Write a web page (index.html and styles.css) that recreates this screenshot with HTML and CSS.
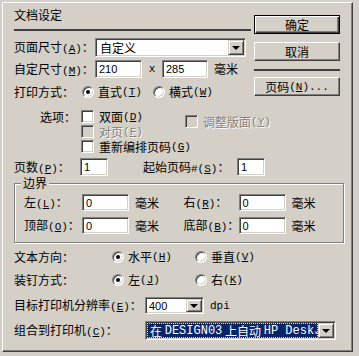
FILE: index.html
```html
<!DOCTYPE html>
<html lang="zh-CN">
<head>
    <meta charset="UTF-8">
    <title>文档设定</title>
    <link rel="stylesheet" href="styles.css">
</head>
<body>
    <div class="dialog">
        <div class="top">
            <div class="main">
                <div class="title">文档设定</div>

                <!-- 页面尺寸 -->
                <div class="row r-size">
                    <span class="lbl w81">页面尺寸<span class="k">(<u>A</u>)</span>：</span>
                    <div class="combo w151">
                        <div class="combo-field">自定义</div>
                        <span class="arrow"></span>
                    </div>
                </div>

                <div class="row r-custom">
                    <span class="lbl w81">自定尺寸<span class="k">(<u>M</u>)</span>：</span>
                    <div class="field w47">210</div>
                    <span class="times">x</span>
                    <div class="field w46">285</div>
                    <span class="unit">毫米</span>
                </div>

                <div class="row r-print">
                    <span class="lbl w68">打印方式：</span>
                    <span class="radio w71"><span class="rb on"></span>直式<span class="k">(<u>T</u>)</span></span>
                    <span class="radio"><span class="rb"></span>横式<span class="k">(<u>W</u>)</span></span>
                </div>

                <!-- 选项 -->
                <div class="options">
                    <div class="opt-label">选项：</div>
                    <div class="opt-list">
                        <div class="check"><span class="cb"></span>双面<span class="k">(<u>D</u>)</span></div>
                        <div class="check disabled"><span class="cb"></span>对页<span class="k">(<u>F</u>)</span></div>
                        <div class="check"><span class="cb"></span>重新编排页码<span class="k">(<u>G</u>)</span></div>
                    </div>
                    <div class="opt-side">
                        <div class="check disabled"><span class="cb"></span>调整版面<span class="k">(<u>Y</u>)</span></div>
                    </div>
                </div>
            </div>

            <div class="buttons">
                <div class="btn default">确定</div>
                <div class="btn b-cancel">取消</div>
                <div class="sep"></div>
                <div class="btn b-page">页码<span class="k">(<u>N</u>)...</span></div>
            </div>
        </div>

        <div class="row r-pages">
            <span class="lbl w66">页数<span class="k">(<u>P</u>)</span>：</span>
            <div class="field w28">1</div>
            <span class="lbl l-start">起始页码<span class="k">#(<u>S</u>)</span>：</span>
            <div class="field w28">1</div>
        </div>

        <!-- 边界 -->
        <fieldset class="group">
            <legend>边界</legend>
            <div class="mrow">
                <div class="mcol">
                    <span class="lbl w58">左<span class="k">(<u>L</u>)</span>：</span>
                    <div class="field w47">0</div>
                    <span class="unit">毫米</span>
                </div>
                <div class="mcol">
                    <span class="lbl w55">右<span class="k">(<u>R</u>)</span>：</span>
                    <div class="field w47">0</div>
                    <span class="unit">毫米</span>
                </div>
            </div>
            <div class="mrow">
                <div class="mcol">
                    <span class="lbl w58">顶部<span class="k">(<u>O</u>)</span>：</span>
                    <div class="field w47">0</div>
                    <span class="unit">毫米</span>
                </div>
                <div class="mcol">
                    <span class="lbl w55">底部<span class="k">(<u>B</u>)</span>：</span>
                    <div class="field w47">0</div>
                    <span class="unit">毫米</span>
                </div>
            </div>
        </fieldset>

        <div class="row r-dir">
            <span class="lbl w98">文本方向：</span>
            <span class="radio w83"><span class="rb on"></span>水平<span class="k">(<u>H</u>)</span></span>
            <span class="radio"><span class="rb"></span>垂直<span class="k">(<u>V</u>)</span></span>
        </div>

        <div class="row r-bind">
            <span class="lbl w98">装钉方式：</span>
            <span class="radio w83"><span class="rb on"></span>左<span class="k">(<u>J</u>)</span></span>
            <span class="radio"><span class="rb"></span>右<span class="k">(<u>K</u>)</span></span>
        </div>

        <div class="row r-dpi">
            <span class="lbl w131">目标打印机分辨率<span class="k">(<u>E</u>)</span>：</span>
            <div class="combo w59">
                <div class="combo-field num">400</div>
                <span class="arrow"></span>
            </div>
            <span class="dpi">dpi</span>
        </div>

        <div class="row r-printer">
            <span class="lbl w131">组合到打印机<span class="k">(<u>C</u>)</span>：</span>
            <div class="combo w191">
                <div class="combo-field">
                    <span class="selected">在 <span class="mono">DESIGN03</span> 上自动 <span class="mono">HP DeskJ</span></span>
                </div>
                <span class="arrow"></span>
            </div>
        </div>
    </div>
</body>
</html>
```

FILE: styles.css
```css
/* Windows 经典对话框 */
body {
    margin: 0;
    background-color: #d4d0c8;
    color: #000000;
    font: 12px/14px "Noto Sans CJK SC", sans-serif;
}

.dialog {
    margin: 2px;
    width: 351px;
    height: 350px;
    box-sizing: border-box;
    padding: 0 8px 0 11px;
    border: 1px solid;
    border-color: #ffffff #404040 #404040 #ffffff;
    box-shadow: inset -1px -1px #808080;
}

.top {
    display: flex;
}

.main {
    width: 237px;
}

.title {
    margin-top: 5px;
    padding-bottom: 7px;
    border-bottom: 2px solid #404040;
}

.row {
    display: flex;
    align-items: center;
    white-space: nowrap;
}

.lbl {
    flex: none;
    white-space: nowrap;
}

.k {
    font: 11px "Liberation Mono", monospace;
}

/* 宽度 */
.w28 { width: 28px; }
.w46 { width: 46px; }
.w47 { width: 47px; }
.w55 { width: 55px; }
.w58 { width: 58px; }
.w59 { width: 59px; }
.w66 { width: 66px; }
.w68 { width: 68px; }
.w71 { width: 71px; }
.w81 { width: 81px; }
.w83 { width: 83px; }
.w98 { width: 98px; }
.w131 { width: 131px; }
.w151 { width: 151px; }
.w191 { width: 191px; }

/* 行位置 */
.r-size { margin-top: 7px; height: 19px; }
.r-custom { margin-top: 3px; height: 18px; }
.r-print { margin-top: 7px; height: 14px; }
.r-pages { margin-top: 4px; height: 18px; }
.r-dir { margin-top: 7px; height: 14px; }
.r-bind { margin-top: 9px; height: 14px; }
.r-dpi { margin-top: 10px; height: 17px; }
.r-printer { margin-top: 7px; height: 19px; }

/* 输入框 */
.field {
    flex: none;
    height: 100%;
    box-sizing: border-box;
    display: flex;
    align-items: center;
    padding: 0 3px;
    background-color: #ffffff;
    border: 1px solid;
    border-color: #808080 #ffffff #ffffff #808080;
    box-shadow: inset 1px 1px #404040, inset -1px -1px #d4d0c8;
    font: 11px "Liberation Sans", sans-serif;
}

.times {
    width: 20px;
    text-align: center;
    font: 11px "Liberation Mono", monospace;
}

.unit {
    margin-left: 6px;
}

.l-start {
    margin-left: 35px;
    width: 94px;
}

/* 下拉框 */
.combo {
    flex: none;
    height: 100%;
    box-sizing: border-box;
    display: flex;
    padding: 1px;
    background-color: #ffffff;
    border: 1px solid;
    border-color: #808080 #ffffff #ffffff #808080;
    box-shadow: inset 1px 1px #404040, inset -1px -1px #d4d0c8;
}

.combo-field {
    flex: 1;
    min-width: 0;
    display: flex;
    align-items: center;
    padding-left: 3px;
    overflow: hidden;
    white-space: nowrap;
}

.combo-field.num {
    font: 11px "Liberation Sans", sans-serif;
    padding-left: 2px;
}

.arrow {
    flex: none;
    width: 16px;
    box-sizing: border-box;
    display: flex;
    align-items: center;
    justify-content: center;
    background-color: #d4d0c8;
    border: 1px solid;
    border-color: #d4d0c8 #404040 #404040 #d4d0c8;
    box-shadow: inset 1px 1px #ffffff, inset -1px -1px #808080;
}

.arrow::after {
    content: "";
    border-top: 4px solid #000000;
    border-left: 4px solid transparent;
    border-right: 4px solid transparent;
    margin-top: 1px;
}

.combo-field:has(.selected) {
    padding-left: 0;
}

.selected {
    flex: 1;
    display: flex;
    align-items: center;
    height: 100%;
    box-sizing: border-box;
    padding: 0 3px;
    overflow: hidden;
    background-color: #0a246a;
    color: #ffffff;
    outline: 1px dotted #e8e49a;
    outline-offset: -1px;
    white-space: pre;
}

.mono {
    font: 12px "Liberation Mono", monospace;
}

.dpi {
    margin-left: 6px;
    font: 11px "Liberation Mono", monospace;
}

/* 单选按钮 */
.radio {
    flex: none;
    display: flex;
    align-items: center;
    white-space: nowrap;
}

.rb {
    width: 12px;
    height: 12px;
    box-sizing: border-box;
    margin-right: 4px;
    border-radius: 50%;
    display: flex;
    align-items: center;
    justify-content: center;
    background-color: #ffffff;
    border: 1px solid;
    border-color: #808080 #ffffff #ffffff #808080;
    box-shadow: inset 1px 1px #404040, inset -1px -1px #d4d0c8;
}

.rb.on::after {
    content: "";
    width: 4px;
    height: 4px;
    border-radius: 50%;
    background-color: #000000;
}

/* 复选框 */
.options {
    display: flex;
    margin-top: 10px;
}

.opt-label {
    width: 67px;
    box-sizing: border-box;
    padding-left: 26px;
    line-height: 15px;
    flex: none;
}

.opt-list {
    width: 104px;
    flex: none;
}

.opt-side {
    padding-top: 5px;
}

.check {
    display: flex;
    align-items: center;
    height: 15px;
    white-space: nowrap;
}

.cb {
    flex: none;
    width: 13px;
    height: 13px;
    box-sizing: border-box;
    margin-right: 5px;
    background-color: #ffffff;
    border: 1px solid;
    border-color: #808080 #ffffff #ffffff #808080;
    box-shadow: inset 1px 1px #404040, inset -1px -1px #d4d0c8;
}

.disabled {
    color: #808080;
    text-shadow: 1px 1px #ffffff;
}

.disabled .cb {
    background-color: #d4d0c8;
}

/* 按钮 */
.buttons {
    width: 86px;
    margin-left: 3px;
    padding-top: 12px;
    flex: none;
}

.btn {
    height: 19px;
    box-sizing: border-box;
    display: flex;
    align-items: center;
    justify-content: center;
    white-space: nowrap;
    border: 1px solid;
    border-color: #ffffff #404040 #404040 #ffffff;
    box-shadow: inset -1px -1px #808080;
}

.btn.default {
    border-color: #000000;
    box-shadow: inset 1px 1px #ffffff, inset -1px -1px #404040, inset -2px -2px #808080;
}

.b-cancel {
    margin-top: 8px;
}

.sep {
    margin-top: 8px;
    height: 2px;
    background-color: #404040;
}

.b-page {
    margin-top: 6px;
}

/* 边界分组 */
.group {
    margin: 0;
    padding: 4px 0 8px 9px;
    min-width: 0;
    width: 330px;
    box-sizing: border-box;
    border: 1px solid #808080;
    box-shadow: inset 1px 1px #ffffff, 1px 1px #ffffff;
}

.group legend {
    margin-left: -3px;
    padding: 0 2px;
    background-color: #d4d0c8;
    line-height: 14px;
}

.mrow {
    display: flex;
    height: 17px;
}

.mrow + .mrow {
    margin-top: 6px;
}

.mcol {
    width: 163px;
    display: flex;
    align-items: center;
    white-space: nowrap;
}
```
